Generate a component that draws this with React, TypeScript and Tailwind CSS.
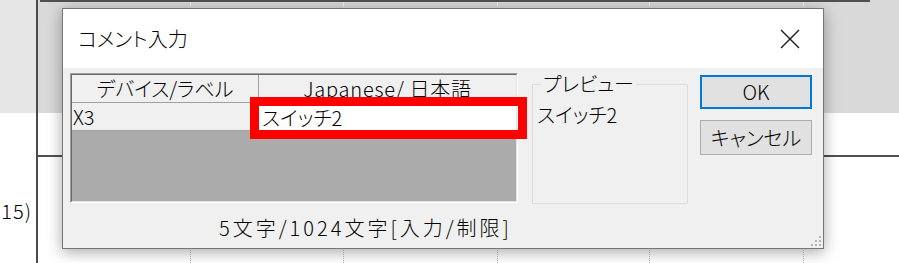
import React from "react";

function Grip() {
  const dots = [
    [9, 1],
    [9, 5],
    [5, 5],
    [9, 9],
    [5, 9],
    [1, 9],
  ];
  return (
    <svg width="12" height="12" viewBox="0 0 12 12" className="absolute right-[1px] bottom-[1px]">
      {dots.map(([x, y], i) => (
        <rect key={i} x={x} y={y} width="2" height="2" fill="#b4b4b4" />
      ))}
    </svg>
  );
}

export default function App() {
  return (
    <div className="relative w-[899px] h-[263px] overflow-hidden bg-white flex text-black font-light font-['Noto_Sans_CJK_JP',sans-serif] [font-feature-settings:'palt']">
      {/* backdrop: left row-header column */}
      <div className="w-[36px] flex flex-col">
        <div className="h-[113px] bg-[#e6e6e6]" />
        <div className="flex-1 pt-[88px] pr-[4px] text-right text-[20px] leading-[20px] whitespace-nowrap tracking-[1px]">15)</div>
      </div>
      <div className="w-[2px] bg-[#4a4a4a]" />
      {/* backdrop: sheet */}
      <div className="flex-1 flex flex-col">
        <div className="h-[113px] bg-[#d9d9d9] flex flex-col">
          <div className="ml-[2px] w-[830px] h-[2px] bg-[#505050]" />
          <div className="flex h-[5px]">
            <div className="w-[153px] border-r border-[#efefef]" />
            <div className="w-[153px] border-r border-[#efefef]" />
            <div className="w-[154px] border-r border-[#efefef]" />
            <div className="w-[152px] border-r border-[#efefef]" />
            <div className="w-[154px] border-r border-[#efefef]" />
          </div>
        </div>
        <div className="h-[42px]" />
        <div className="h-[2px] bg-[#505050]" />
        <div className="flex-1 flex">
          <div className="w-[153px] border-r border-dotted border-[#bdbdbd]" />
          <div className="w-[153px] border-r border-dotted border-[#bdbdbd]" />
          <div className="w-[154px] border-r border-dotted border-[#bdbdbd]" />
          <div className="w-[152px] border-r border-dotted border-[#bdbdbd]" />
          <div className="w-[154px] border-r border-dotted border-[#bdbdbd]" />
        </div>
      </div>

      {/* dialog */}
      <div className="absolute left-[62px] top-[8px] w-[762px] h-[241px] border border-[#767676] bg-[#f0f0f0] flex flex-col shadow-[0_3px_14px_rgba(0,0,0,0.35)]">
        <div className="h-[59px] bg-white flex items-center justify-between pl-[15px] pr-[23px]">
          <span className="text-[20px] leading-[20px] whitespace-nowrap">コメント入力</span>
          <svg width="20" height="20" viewBox="0 0 20 20">
            <path d="M1 1L19 19M19 1L1 19" stroke="#1a1a1a" strokeWidth="1.4" fill="none" />
          </svg>
        </div>
        <div className="flex-1 flex pl-[7px] pt-[5px] text-[20px]">
          {/* grid + status */}
          <div className="w-[448px] flex flex-col">
            <div className="relative h-[130px] border border-t-[#a0a0a0] border-l-[#a0a0a0] border-b-white border-r-white">
              <div className="h-full border border-t-[#696969] border-l-[#696969] border-b-[#e3e3e3] border-r-[#e3e3e3] bg-[#ababab] flex flex-col">
                <div className="h-[28px] flex bg-[#f0f0f0] border-b border-[#a0a0a0]">
                  <div className="w-[187px] border-r border-[#a0a0a0] flex items-center justify-center leading-[20px] whitespace-nowrap">
                    デバイス/ラベル
                  </div>
                  <div className="flex-1 flex items-center justify-center leading-[20px] whitespace-nowrap tracking-[0.8px]">
                    Japanese/&thinsp;日本語
                  </div>
                </div>
                <div className="h-[28px] flex border-b border-[#a0a0a0]">
                  <div className="w-[187px] bg-[#f0f0f0] border-r border-[#a0a0a0] flex items-center pl-[1px] leading-[20px]">
                    X3
                  </div>
                  <div className="flex-1 bg-white flex items-center pl-[3px] pt-[3px] leading-[20px] whitespace-nowrap">
                    スイッチ2
                  </div>
                </div>
              </div>
              <div className="absolute left-[179px] top-[23px] w-[277px] h-[42px] border-[9px] border-[#ff0000]" />
            </div>
            <div className="mt-[13px] h-[24px] leading-[24px] pl-[149px] whitespace-nowrap tracking-[3px]">
              5文字/1024文字[入力/制限]
            </div>
          </div>

          {/* preview group */}
          <div className="relative ml-[14px] mt-[11px] w-[156px] h-[120px] border border-[#dcdcdc]">
            <span className="absolute left-[8px] top-[-11px] bg-[#f0f0f0] px-[2px] leading-[20px] whitespace-nowrap">
              プレビュー
            </span>
            <div className="pl-[4px] pt-[20px] leading-[20px] whitespace-nowrap">スイッチ2</div>
          </div>

          {/* buttons */}
          <div className="ml-[12px] w-[112px] flex flex-col">
            <div className="mt-[2px] h-[34px] border-2 border-[#0078d7] bg-[#e1e1e1] flex items-center justify-center leading-[20px]">
              OK
            </div>
            <div className="mt-[11px] h-[35px] border border-[#adadad] bg-[#e1e1e1] flex items-center justify-center leading-[20px] whitespace-nowrap">
              キャンセル
            </div>
          </div>
        </div>
        <Grip />
      </div>
    </div>
  );
}
